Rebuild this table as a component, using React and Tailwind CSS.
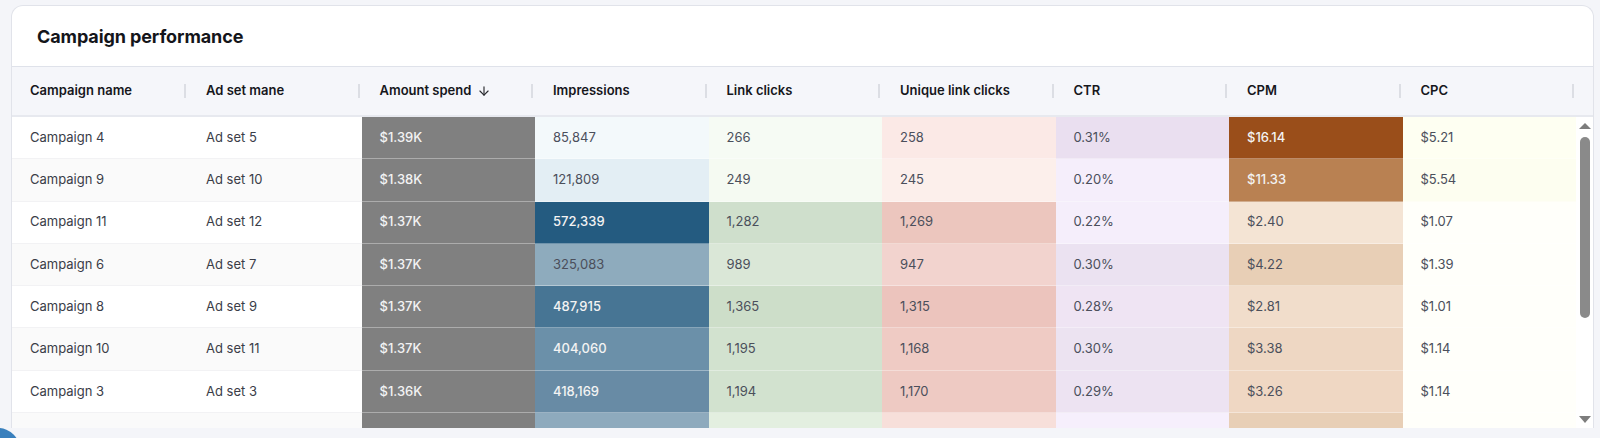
import { ArrowDown } from 'lucide-react';

const columns = [
  'Campaign name',
  'Ad set mane',
  'Amount spend',
  'Impressions',
  'Link clicks',
  'Unique link clicks',
  'CTR',
  'CPM',
  'CPC',
];

// each cell: [text, bg, light text?]
const rows = [
  {
    name: 'Campaign 4', adset: 'Ad set 5', zebra: false,
    cells: [
      ['$1.39K', '#808080', true], ['85,847', '#f3f9fb'], ['266', '#f6fbf4'], ['258', '#fbe9e6'],
      ['0.31%', '#eadff0'], ['$16.14', '#9a4e1a', true], ['$5.21', '#fefff2'],
    ],
  },
  {
    name: 'Campaign 9', adset: 'Ad set 10', zebra: true,
    cells: [
      ['$1.38K', '#808080', true], ['121,809', '#e3eef4'], ['249', '#f5faf2'], ['245', '#fcefeb'],
      ['0.20%', '#f5eefb'], ['$11.33', '#b98152', true], ['$5.54', '#fdfef0'],
    ],
  },
  {
    name: 'Campaign 11', adset: 'Ad set 12', zebra: false,
    cells: [
      ['$1.37K', '#808080', true], ['572,339', '#245b80', true], ['1,282', '#cfdfcc'], ['1,269', '#ecc6be'],
      ['0.22%', '#f5eefb'], ['$2.40', '#f4e4d4'], ['$1.07', '#fffffa'],
    ],
  },
  {
    name: 'Campaign 6', adset: 'Ad set 7', zebra: true,
    cells: [
      ['$1.37K', '#808080', true], ['325,083', '#8eabbd'], ['989', '#dae7d7'], ['947', '#f2d3ce'],
      ['0.30%', '#ebe2f1'], ['$4.22', '#e8cfb6'], ['$1.39', '#fffffa'],
    ],
  },
  {
    name: 'Campaign 8', adset: 'Ad set 9', zebra: false,
    cells: [
      ['$1.37K', '#808080', true], ['487,915', '#477594', true], ['1,365', '#cddec9'], ['1,315', '#ecc4bd'],
      ['0.28%', '#efe4f3'], ['$2.81', '#f1ddcb'], ['$1.01', '#fffffa'],
    ],
  },
  {
    name: 'Campaign 10', adset: 'Ad set 11', zebra: true,
    cells: [
      ['$1.37K', '#808080', true], ['404,060', '#6b90a9', true], ['1,195', '#d2e2cf'], ['1,168', '#efcbc4'],
      ['0.30%', '#ece3f1'], ['$3.38', '#eed7c3'], ['$1.14', '#fffffa'],
    ],
  },
  {
    name: 'Campaign 3', adset: 'Ad set 3', zebra: false,
    cells: [
      ['$1.36K', '#808080', true], ['418,169', '#688ba5', true], ['1,194', '#d2e2cf'], ['1,170', '#eecac3'],
      ['0.29%', '#ede3f2'], ['$3.26', '#efd7c3'], ['$1.14', '#fffffa'],
    ],
  },
  // next row only peeks out under the fold
  {
    name: '', adset: '', zebra: true,
    cells: [
      ['', '#808080', true], ['', '#8eaabd'], ['', '#e3efe0'], ['', '#f7dfda'],
      ['', '#f6effc'], ['', '#e8cfb6'], ['', '#fffffa'],
    ],
  },
];

const gridCols = 'grid grid-cols-[176px_repeat(8,173.5px)]';

function Scrollbar() {
  return (
    <div className="w-[17px] bg-white flex flex-col items-center pt-[6px] pb-[5px]">
      <div className="w-0 h-0 border-l-[6px] border-r-[6px] border-b-[6px] border-l-transparent border-r-transparent border-b-[#7d7d7d]" />
      <div className="w-[10px] h-[181px] mt-[8px] rounded-full bg-[#8a8a8a]" />
      <div className="flex-1" />
      <div className="w-0 h-0 border-l-[6px] border-r-[6px] border-t-[7px] border-l-transparent border-r-transparent border-t-[#7d7d7d]" />
    </div>
  );
}

export default function App() {
  return (
    <div
      className="relative w-[1600px] h-[438px] overflow-hidden bg-[#f4f5f9] pt-[5px] pl-[11px]"
      style={{ fontFamily: 'Inter, "Noto Sans", sans-serif' }}
    >
      <div className="w-[1583px] h-[423px] bg-white border-t border-l border-r border-[#e1e3ea] rounded-t-[12px] overflow-hidden flex flex-col">
        <div className="h-[61px] shrink-0 border-b border-[#dfe2ea] flex items-center pl-[25px]">
          <h2 className="text-[18px] font-bold text-[#14151a] tracking-[-0.1px]">Campaign performance</h2>
        </div>

        <div className="flex shrink-0 bg-[#f5f6fa] border-b-2 border-[#e7e9ef]">
          <div className={`${gridCols} h-[48px]`}>
            {columns.map((col) => (
              <div key={col} className="relative flex items-center pl-[18px] text-[13px] font-semibold text-[#16171c]">
                {col}
                {col === 'Amount spend' && <ArrowDown size={14} strokeWidth={2} className="ml-[6px] text-[#2a2b30]" />}
                <span className="absolute right-[2px] top-[17px] h-[14px] w-[2px] bg-[#dcdee4]" />
              </div>
            ))}
          </div>
          <div className="w-[17px]" />
        </div>

        <div className="flex flex-1 min-h-0">
          <div className="flex flex-col">
            {rows.map((row, r) => (
              <div key={r} className={`${gridCols} h-[42.3px] shrink-0 text-[13px]`}>
                <div className={`flex items-center pl-[18px] text-[#3a3d48] border-b border-[#f2f2f4] ${row.zebra ? 'bg-[#fafafa]' : 'bg-white'}`}>
                  {row.name}
                </div>
                <div className={`flex items-center pl-[18px] text-[#3a3d48] border-b border-[#f2f2f4] ${row.zebra ? 'bg-[#fafafa]' : 'bg-white'}`}>
                  {row.adset}
                </div>
                {row.cells.map(([text, bg, light], i) => (
                  <div
                    key={i}
                    className={`flex items-center pl-[18px] border-b border-white/35 ${light ? 'text-[#f3f3f3] font-medium' : 'text-[#4b4f5b]'}`}
                    style={{ backgroundColor: bg }}
                  >
                    {text}
                  </div>
                ))}
              </div>
            ))}
          </div>
          <Scrollbar />
        </div>
      </div>

      <div className="absolute left-[-24px] top-[428px] w-[44px] h-[44px] rounded-full bg-[#3a80bd]" />
    </div>
  );
}
